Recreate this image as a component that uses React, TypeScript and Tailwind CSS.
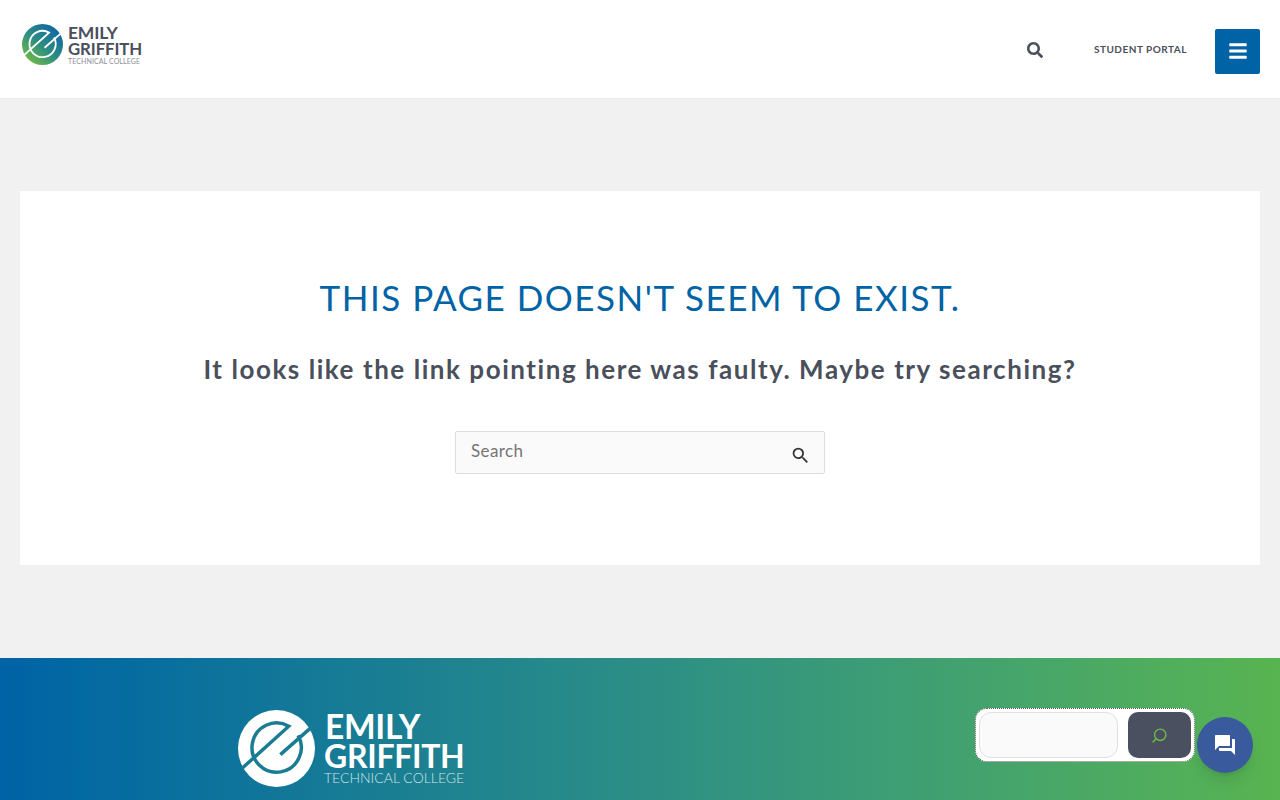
import React from 'react';
import { FaSearch, FaBars } from 'react-icons/fa';
import { MdSearch, MdQuestionAnswer } from 'react-icons/md';
import { Search } from 'lucide-react';

const LogoMark: React.FC<{ className: string; ink: string; fill: string }> = ({ className, ink, fill }) => (
    <svg viewBox="0 0 100 100" className={className}>
        <defs>
            <linearGradient id="markGrad" x1="0.85" y1="0.1" x2="0.15" y2="0.9">
                <stop offset="0" stopColor="#0f66a6" />
                <stop offset="0.55" stopColor="#2f8f7f" />
                <stop offset="1" stopColor="#6dbb45" />
            </linearGradient>
        </defs>
        <circle cx="50" cy="50" r="50" fill={fill} />
        <path d="M5 76 L66 21 A32 32 0 1 0 78 33" fill="none" stroke={ink} strokeWidth="4.5" />
        <path d="M97 21 L55 58" fill="none" stroke={ink} strokeWidth="4.5" />
    </svg>
);

const SiteHeader = () => (
    <header className="h-[99px] bg-white flex items-center justify-between pl-[22px] pr-5 border-b border-[#ececec]">
        <div className="flex items-center gap-[5px] -mt-[10px]">
            <LogoMark className="w-[41px] h-[41px]" fill="url(#markGrad)" ink="#ffffff" />
            <div className="text-[#4a4f5c] font-['Lato',sans-serif]">
                <div className="text-[17.5px] leading-[16px] font-bold tracking-[-0.2px] mt-[2px]">EMILY</div>
                <div className="text-[16.8px] leading-[16px] font-bold tracking-[-0.1px]">GRIFFITH</div>
                <div className="text-[7px] leading-[8px] text-[#8b8f98] whitespace-nowrap tracking-[0.1px]">TECHNICAL COLLEGE</div>
            </div>
        </div>
        <div className="flex items-center mt-[4px]">
            <FaSearch className="w-4 h-4 text-[#4a4f5c] -mt-[3px]" />
            <a className="ml-[51px] mr-[28px] text-[10px] font-bold tracking-[0.5px] text-[#4a4f5c] font-['Lato',sans-serif] -mt-[3px]">STUDENT PORTAL</a>
            <button className="w-[45px] h-[45px] bg-[#0063a5] rounded-[2px] flex items-center justify-center">
                <FaBars className="w-5 h-5 text-white" />
            </button>
        </div>
    </header>
);

const NotFoundCard = () => (
    <main className="mx-5 mt-[92px] h-[374px] bg-white flex flex-col items-center pt-[83px] font-['Lato',sans-serif]">
        <h1 className="text-[35px] leading-[46px] text-[#0063a5] tracking-[1.5px] whitespace-nowrap">THIS PAGE DOESN'T SEEM TO EXIST.</h1>
        <h2 className="mt-[31px] text-[26px] leading-[36px] font-bold text-[#4a4f5c] tracking-[1.55px] whitespace-nowrap">It looks like the link pointing here was faulty. Maybe try searching?</h2>
        <div className="mt-[44px] w-[370px] h-[43px] bg-[#fafafa] border border-[#dddddd] rounded-[2px] flex items-center pl-[15px] pr-[13px]">
            <input placeholder="Search" className="flex-1 min-w-0 bg-transparent outline-none text-[17px] tracking-[0.4px] placeholder:text-[#757575] -mt-[3px]" />
            <MdSearch className="w-[21px] h-[21px] text-[#333333] mt-[5px]" />
        </div>
    </main>
);

const SiteFooter = () => (
    <footer className="mt-[93px] h-[142px] bg-gradient-to-r from-[#0063a5] to-[#58b44f] pl-[238px] pt-[52px]">
        <div className="flex items-start gap-[9px]">
            <LogoMark className="w-[77px] h-[77px]" fill="#ffffff" ink="#1a7c92" />
            <div className="text-white font-['Lato',sans-serif] -mt-[1px]">
                <div className="text-[33.5px] leading-[30px] font-bold tracking-[-0.3px] pt-[2px] pl-[1px]">EMILY</div>
                <div className="text-[32px] leading-[30px] font-bold tracking-[-0.3px]">GRIFFITH</div>
                <div className="text-[14px] leading-[14px] font-light text-[#cfe3e6] whitespace-nowrap">TECHNICAL COLLEGE</div>
            </div>
        </div>
    </footer>
);

export default function App() {
    return (
        <div className="relative h-[800px] overflow-hidden bg-[#f1f1f1]">
            <SiteHeader />
            <NotFoundCard />
            <SiteFooter />
            <div className="absolute left-[975px] top-[708px] w-[220px] h-[54px] bg-white rounded-[12px] border border-dotted border-[#555555] flex items-center gap-[10px] pl-[3px]">
                <div className="w-[139px] h-[46px] bg-[#fafafa] border border-[#e2dfe2] rounded-[12px]" />
                <div className="w-[63px] h-[46px] bg-[#4a5060] rounded-[10px] flex items-center justify-center">
                    <Search className="w-[17px] h-[17px] text-[#6dbb45] -scale-x-100" strokeWidth={2} />
                </div>
            </div>
            <div className="absolute left-[1197px] top-[717px] w-14 h-14 rounded-full bg-[#3a5a9e] shadow-lg flex items-center justify-center">
                <MdQuestionAnswer className="w-[24px] h-[24px] text-white" />
            </div>
        </div>
    );
}
